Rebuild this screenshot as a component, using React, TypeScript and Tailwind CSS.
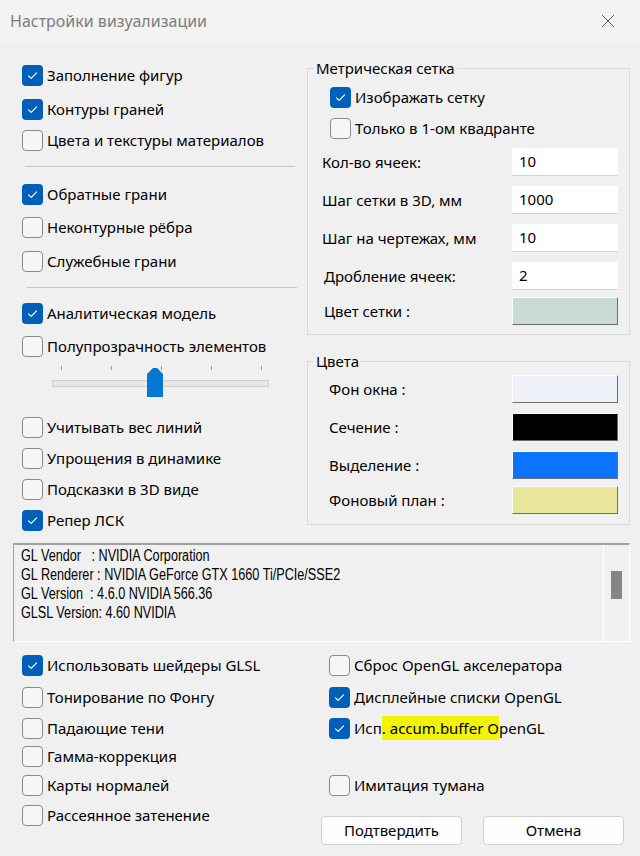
import React from "react";

const FONT = "font-['Noto_Sans','Open_Sans',sans-serif]";

function Box({ checked }: { checked: boolean }) {
  if (checked) {
    return (
      <span className="flex h-[21px] w-[21px] shrink-0 items-center justify-center rounded-[4px] bg-[#005fb8]">
        <svg width="13" height="13" viewBox="0 0 13 13" fill="none">
          <path d="M2.5 6.8 L5.2 9.4 L10.6 3.8" stroke="white" strokeWidth="1.15" strokeLinecap="round" strokeLinejoin="round" />
        </svg>
      </span>
    );
  }
  return <span className="block h-[21px] w-[21px] shrink-0 rounded-[4px] border border-[#8a8a8a] bg-[#f6f6f6]" />;
}

function Check({
  label,
  checked = false,
  short = false,
  className = "",
  children,
}: {
  label?: string;
  checked?: boolean;
  short?: boolean;
  className?: string;
  children?: React.ReactNode;
}) {
  return (
    <div className={(short ? "h-[28px] " : "h-[30px] ") + "flex items-center gap-[4px] " + className}>
      <Box checked={checked} />
      <span className="whitespace-nowrap text-[15px] leading-none text-black">{children ?? label}</span>
    </div>
  );
}

function Sep({ className = "" }: { className?: string }) {
  return <div className={"h-px w-[270px] bg-[#c4c4c4] " + className} />;
}

function Slider() {
  const ticks = [0, 1, 2, 3, 4];
  return (
    <div className="flex h-[40px] flex-col">
      <div className="ml-[39px] mt-[5px] flex gap-[49px]">
        {ticks.map((t) => (
          <span key={t} className="block h-[4px] w-px bg-[#9a9a9a]" />
        ))}
      </div>
      <div className="relative ml-[30px] mt-[10px] h-[7px] w-[217px] border border-[#d0d0d0] bg-[#e6e6e6]">
        <svg className="absolute left-[94px] top-[-13px]" width="16" height="29" viewBox="0 0 16 29">
          <path d="M0 6 L6 0 L10 0 L16 6 L16 29 L0 29 Z" fill="#0078d4" />
        </svg>
      </div>
    </div>
  );
}

function Field({ label, value, labelPad, className = "" }: { label: string; value: string; labelPad: string; className?: string }) {
  return (
    <div className={"flex h-[28px] items-center " + className}>
      <span className={"text-[15px] leading-none text-black " + labelPad}>{label}</span>
      <div className="ml-auto mr-[11px] flex h-[28px] w-[106px] items-center border-b border-[#d4d4d4] bg-white pl-[7px] text-[15px] leading-none text-black">
        {value}
      </div>
    </div>
  );
}

function ColorRow({ label, color, labelPad, className = "" }: { label: string; color: string; labelPad: string; className?: string }) {
  return (
    <div className={"flex h-[28px] items-center " + className}>
      <span className={"text-[15px] leading-none text-black " + labelPad}>{label}</span>
      <div
        className="ml-auto mr-[11px] h-[28px] w-[106px] border border-t-white border-l-white border-r-[#6e6e6e] border-b-[#6e6e6e]"
        style={{ backgroundColor: color }}
      />
    </div>
  );
}

export default function App() {
  return (
    <div className={"h-[856px] w-[640px] overflow-hidden bg-[#f0f0f0] " + FONT}>
      {/* title bar */}
      <div className="flex h-[42px] items-center justify-between bg-[#f3f3f3] pl-[10px] pr-[25px]">
        <span className="text-[16px] text-[#7d7d7d]">Настройки визуализации</span>
        <svg width="14" height="14" viewBox="0 0 14 14">
          <path d="M1 1 L13 13 M13 1 L1 13" stroke="#555" strokeWidth="1" />
        </svg>
      </div>

      {/* main area */}
      <div className="flex h-[501px]">
        {/* left column */}
        <div className="flex w-[307px] flex-col pl-[22px] pt-[18px]">
          <Check label="Заполнение фигур" checked />
          <Check label="Контуры граней" checked className="mt-[4px]" />
          <Check label="Цвета и текстуры материалов" className="mt-[1px]" />
          <Sep className="ml-[3px] mt-[11px]" />
          <Check label="Обратные грани" checked className="mt-[12px]" />
          <Check label="Неконтурные рёбра" className="mt-[3px]" />
          <Check label="Служебные грани" className="mt-[4px]" />
          <Sep className="ml-[5px] mt-[11px]" />
          <Check label="Аналитическая модель" checked className="mt-[10px]" />
          <Check label="Полупрозрачность элементов" className="mt-[3px]" />
          <Slider />
          <Check label="Учитывать вес линий" className="mt-[11px]" />
          <Check label="Упрощения в динамике" className="mt-[1px]" />
          <Check label="Подсказки в 3D виде" className="mt-[1px]" />
          <Check label="Репер ЛСК" checked className="mt-[1px]" />
        </div>

        {/* right column */}
        <div className="flex w-[323px] flex-col">
          <fieldset className="mt-[16px] border border-[#d9d9d9] pb-[9px]">
            <legend className="ml-[6px] h-[20px] px-[2px] text-[15px] leading-[20px] text-black">Метрическая сетка</legend>
            <Check label="Изображать сетку" checked className="ml-[22px] mt-[4px]" />
            <Check label="Только в 1-ом квадранте" className="ml-[22px] mt-[1px]" />
            <Field label="Кол-во ячеек:" value="10" labelPad="pl-[14px]" className="mt-[5px]" />
            <Field label="Шаг сетки в 3D, мм" value="1000" labelPad="pl-[14px]" className="mt-[10px]" />
            <Field label="Шаг на чертежах, мм" value="10" labelPad="pl-[14px]" className="mt-[10px]" />
            <Field label="Дробление ячеек:" value="2" labelPad="pl-[16px]" className="mt-[10px]" />
            <ColorRow label="Цвет сетки :" color="#c9dbd2" labelPad="pl-[16px]" className="mt-[7px]" />
          </fieldset>

          <fieldset className="mt-[16px] border border-[#d9d9d9] pb-[10px]">
            <legend className="ml-[6px] h-[20px] px-[2px] text-[15px] leading-[20px] text-black">Цвета</legend>
            <ColorRow label="Фон окна :" color="#eff1f8" labelPad="pl-[21px]" className="mt-[4px]" />
            <ColorRow label="Сечение :" color="#000000" labelPad="pl-[21px]" className="mt-[10px]" />
            <ColorRow label="Выделение :" color="#0a74ff" labelPad="pl-[21px]" className="mt-[10px]" />
            <ColorRow label="Фоновый план :" color="#e8e69a" labelPad="pl-[21px]" className="mt-[7px]" />
          </fieldset>
        </div>
      </div>

      {/* info text area */}
      <div className="ml-[13px] flex h-[99px] w-[617px] border-b border-l border-r border-t-2 border-b-white border-l-[#a0a0a0] border-r-white border-t-[#a0a0a0]">
        <div className="flex-1 overflow-hidden pl-[7px] pt-[1px]">
          <div className="origin-top-left scale-x-[0.79] whitespace-pre font-['Liberation_Sans',Arial,sans-serif] text-[16px] leading-[19px] text-black">
            {"GL Vendor   : NVIDIA Corporation\nGL Renderer : NVIDIA GeForce GTX 1660 Ti/PCIe/SSE2\nGL Version  : 4.6.0 NVIDIA 566.36\nGLSL Version: 4.60 NVIDIA"}
          </div>
        </div>
        <div className="w-[26px] border-l border-white pl-[7px] pt-[26px]">
          <div className="h-[28px] w-[11px] bg-[#858585]" />
        </div>
      </div>

      {/* bottom options */}
      <div className="flex">
        <div className="flex w-[306px] flex-col pl-[22px] pt-[9px]">
          <Check label="Использовать шейдеры GLSL" checked short />
          <Check label="Тонирование по Фонгу" short className="mt-[4px]" />
          <Check label="Падающие тени" short className="mt-[3px]" />
          <Check label="Гамма-коррекция" short />
          <Check label="Карты нормалей" short className="mt-[1px]" />
          <Check label="Рассеянное затенение" short className="mt-[2px]" />
        </div>
        <div className="flex flex-col pl-[15px] pt-[9px]">
          <Check label="Сброс OpenGL акселератора" short className="ml-[8px]" />
          <Check label="Дисплейные списки OpenGL" checked short className="ml-[8px] mt-[4px]" />
          <Check checked short className="ml-[8px] mt-[3px]">
            Исп<span className="bg-[#f2f20c] py-[2px]">. accum.buffer O</span>penGL
          </Check>
          <Check label="Имитация тумана" short className="ml-[8px] mt-[29px]" />
          <div className="mt-[17px] flex gap-[21px]">
            <button className="h-[29px] w-[141px] rounded-[4px] border border-[#d0d0d0] bg-[#fdfdfd] text-[15px] leading-none text-black">
              Подтвердить
            </button>
            <button className="h-[29px] w-[141px] rounded-[4px] border border-[#d0d0d0] bg-[#fdfdfd] text-[15px] leading-none text-black">
              Отмена
            </button>
          </div>
        </div>
      </div>
    </div>
  );
}
